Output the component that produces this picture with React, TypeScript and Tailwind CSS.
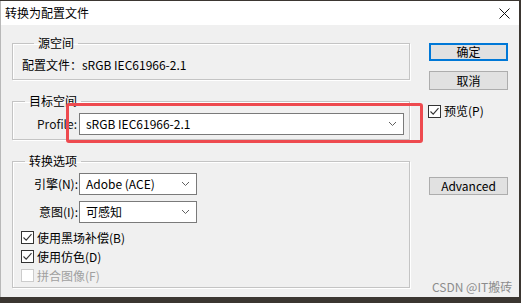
import React from "react";

function Check({ checked, disabled }: { checked?: boolean; disabled?: boolean }) {
  return (
    <span
      className={
        disabled
          ? "w-[13px] h-[13px] border border-[#cccccc] bg-white flex items-center justify-center shrink-0"
          : "w-[13px] h-[13px] border border-[#333333] bg-white flex items-center justify-center shrink-0"
      }
    >
      {checked && (
        <svg width="11" height="11" viewBox="0 0 11 11">
          <path d="M1.5 5.5 L4.2 8.2 L9.5 2.2" stroke="#333" strokeWidth="1.1" fill="none" />
        </svg>
      )}
    </span>
  );
}

function Chevron() {
  return (
    <svg width="9" height="6" viewBox="0 0 9 6" className="shrink-0">
      <path d="M1 1 L4.5 4.5 L8 1" stroke="#606060" strokeWidth="1" fill="none" />
    </svg>
  );
}

function Select({ value, className }: { value: string; className: string }) {
  return (
    <div
      className={
        "h-[22px] border border-[#7a7a7a] bg-white flex items-center justify-between pl-[6px] pr-[6px] " +
        className
      }
    >
      <span className="leading-[16px]">{value}</span>
      <Chevron />
    </div>
  );
}

function Group({
  title,
  className,
  children,
}: {
  title: string;
  className: string;
  children: React.ReactNode;
}) {
  return (
    <fieldset
      className={
        "border border-[#c4c4c4] shadow-[inset_1px_1px_0_#ffffff,1px_1px_0_#ffffff] " + className
      }
    >
      <legend className="ml-[12px] px-[4px] leading-[16px]">{title}</legend>
      {children}
    </fieldset>
  );
}

function Button({ label, primary, className }: { label: string; primary?: boolean; className: string }) {
  return (
    <div
      className={
        (primary
          ? "border-2 border-[#0078d7] "
          : "border border-[#adadad] ") +
        "bg-[#e1e1e1] flex items-center justify-center leading-[16px] w-[79px] " +
        className
      }
    >
      {label}
    </div>
  );
}

export default function App() {
  return (
    <div className="w-[521px] h-[303px] bg-[#3b3631] relative overflow-hidden font-['Noto_Sans_CJK_SC','Microsoft_YaHei',sans-serif] text-[12px] text-black">
      <div className="w-[519px] h-[296px] mt-[1px] bg-[#f0f0f0] border-l border-[#b8b8b8] flex flex-col">
        {/* title bar */}
        <div className="h-[24px] bg-white flex items-center justify-between pl-[4px] pr-[9px] shrink-0">
          <span className="leading-[16px] text-[12px]">转换为配置文件</span>
          <svg width="11" height="11" viewBox="0 0 11 11">
            <path d="M0.5 0.5 L10.5 10.5 M10.5 0.5 L0.5 10.5" stroke="#111" strokeWidth="1" />
          </svg>
        </div>
        {/* body */}
        <div className="flex flex-1">
          <div className="pl-[11px] w-[409px] flex flex-col">
            <Group title="源空间" className="mt-[10px] pt-[6px] pb-[6px] pl-[9px]">
              <div className="leading-[16px]">配置文件：sRGB IEC61966-2.1</div>
            </Group>
            <Group title="目标空间" className="mt-[13px] pt-[4px] pb-[4px] pr-[5px]">
              <div className="flex items-center">
                <span className="w-[64px] text-right leading-[16px] text-[#111]">Profile:</span>
                <Select value="sRGB IEC61966-2.1" className="ml-[2px] flex-1" />
              </div>
            </Group>
            <Group title="转换选项" className="mt-[13px] pt-[4px] pb-[2px]">
              <div className="flex flex-col gap-[6px]">
                <div className="flex items-center">
                  <span className="w-[65px] text-right leading-[16px]">引擎(N):</span>
                  <Select value="Adobe (ACE)" className="ml-[1px] w-[118px]" />
                </div>
                <div className="flex items-center">
                  <span className="w-[65px] text-right leading-[16px]">意图(I):</span>
                  <Select value="可感知" className="ml-[1px] w-[118px]" />
                </div>
              </div>
              <div className="mt-[5px] pl-[8px] flex flex-col">
                <div className="h-[19px] flex items-center gap-[3px]">
                  <Check checked />
                  <span className="leading-[16px]">使用黑场补偿(B)</span>
                </div>
                <div className="h-[19px] flex items-center gap-[3px]">
                  <Check checked />
                  <span className="leading-[16px]">使用仿色(D)</span>
                </div>
                <div className="h-[19px] flex items-center gap-[3px]">
                  <Check disabled />
                  <span className="leading-[16px] text-[#a0a0a0]">拼合图像(F)</span>
                </div>
              </div>
            </Group>
          </div>
          <div className="ml-[19px] flex flex-col">
            <Button label="确定" primary className="mt-[18px] h-[18px]" />
            <Button label="取消" className="mt-[10px] h-[19px]" />
            <div className="mt-[13px] ml-[-1px] flex items-center gap-[3px]">
              <Check checked />
              <span className="leading-[16px]">预览(P)</span>
            </div>
            <Button label="Advanced" className="mt-[58px] h-[18px]" />
          </div>
        </div>
      </div>
      {/* annotation highlight */}
      <div className="absolute left-[66px] top-[103px] w-[357px] h-[40px] border-[3px] border-[#ee4a4f] rounded-[3px]" />
      {/* watermark */}
      <div className="absolute left-[432px] top-[279px] leading-[16px] text-[12px] text-[#8c8c8c]">
        CSDN @IT搬砖
      </div>
    </div>
  );
}
